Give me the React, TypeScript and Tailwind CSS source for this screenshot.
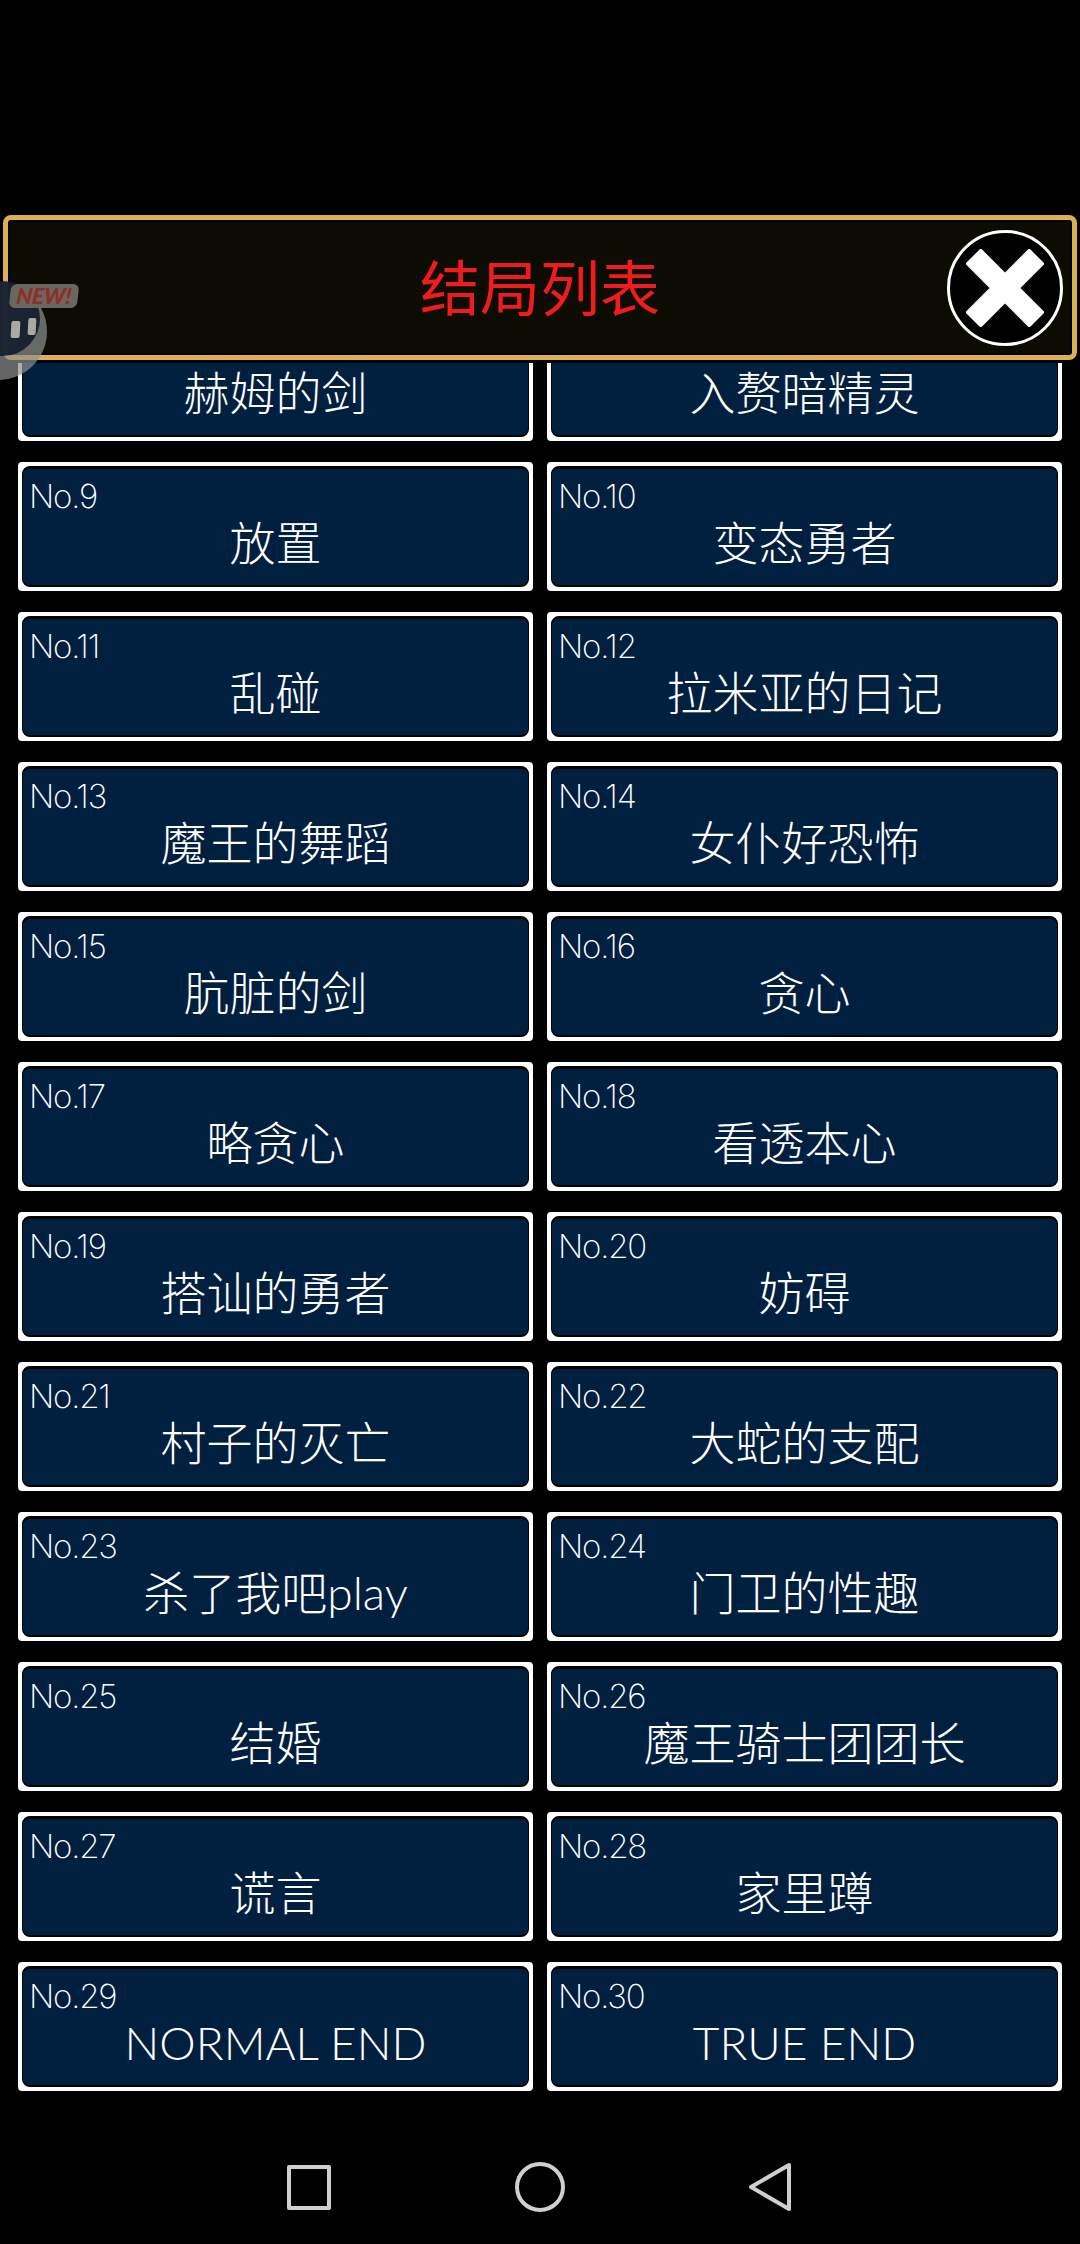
const endings: [number, string][] = [
  [7, "赫姆的剑"],
  [8, "入赘暗精灵"],
  [9, "放置"],
  [10, "变态勇者"],
  [11, "乱碰"],
  [12, "拉米亚的日记"],
  [13, "魔王的舞蹈"],
  [14, "女仆好恐怖"],
  [15, "肮脏的剑"],
  [16, "贪心"],
  [17, "略贪心"],
  [18, "看透本心"],
  [19, "搭讪的勇者"],
  [20, "妨碍"],
  [21, "村子的灭亡"],
  [22, "大蛇的支配"],
  [23, "杀了我吧play"],
  [24, "门卫的性趣"],
  [25, "结婚"],
  [26, "魔王骑士团团长"],
  [27, "谎言"],
  [28, "家里蹲"],
  [29, "NORMAL END"],
  [30, "TRUE END"],
];

const font = "font-['Lato','Noto_Sans_CJK_SC',sans-serif]";

function EndingCard({ no, title }: { no: number; title: string }) {
  return (
    <div className="h-[129px] rounded-[4px] border-[4px] border-white bg-white">
      <div className="h-full rounded-[8px] border-x border-t-[3px] border-b-2 border-black bg-[#011f3f] pl-[6px] pt-[7px] text-white">
        <div className="h-[40px] font-['Inter',sans-serif] text-[33px] leading-[40px] font-extralight tracking-[-1.2px]">No.{no}</div>
        <div className="-ml-[6px] text-center text-[46px] leading-[54px] font-light">{title}</div>
      </div>
    </div>
  );
}

export default function App() {
  return (
    <div className={`relative h-[2244px] overflow-hidden bg-black ${font}`}>
      <div className="pt-[215px]">
        <header className="relative mx-[3px] flex h-[145px] items-center justify-center rounded-[8px] border-[5px] border-[#dcae55] bg-[#0d0c02] shadow-[inset_0_0_0_2px_#000]">
          <h1 className="text-[60px] leading-none text-[#f01c1c]">结局列表</h1>
          <button className="absolute right-[9px] top-[10px] flex h-[116px] w-[116px] items-center justify-center rounded-full border-[3px] border-white bg-black">
            <svg width="78" height="78" viewBox="0 0 78 78">
              <path d="M7 7 L71 71 M71 7 L7 71" stroke="#fff" strokeWidth="22" />
            </svg>
          </button>
        </header>
      </div>

      <div className="mt-[3px] h-[1780px] overflow-hidden">
        <div className="-mt-[51px] grid grid-cols-[515px_515px] gap-x-[14px] gap-y-[21px] pl-[18px]">
          {endings.map(([no, title]) => (
            <EndingCard key={no} no={no} title={title} />
          ))}
        </div>
      </div>

      <nav className="mt-[19px] flex items-center justify-center gap-[184px] pr-[3px]">
        <div className="h-[45px] w-[44px] rounded-[2px] border-[4px] border-[#cfcfcf]" />
        <div className="h-[50px] w-[50px] rounded-full border-[4px] border-[#cfcfcf]" />
        <svg width="42" height="50" viewBox="0 0 42 50" fill="none">
          <path d="M40 3 L2 25 L40 47 Z" stroke="#cfcfcf" strokeWidth="4" strokeLinejoin="round" />
        </svg>
      </nav>

      {/* floating assistant bubble over the page */}
      <div className="absolute left-[-50px] top-[283px] h-[97px] w-[97px] rounded-full bg-[#8f9191]/70" />
      <div className="absolute left-[-47px] top-[281px] h-[75px] w-[87px] rounded-full bg-[#16202e]/95" />
      <div className="absolute left-[11px] top-[321px] h-[17px] w-[9px] -skew-x-3 rounded-[2px] bg-[#a9a9a0]" />
      <div className="absolute left-[28px] top-[318px] h-[17px] w-[8px] -skew-x-3 rounded-[2px] bg-[#a9a9a0]" />
      <div className="absolute left-[10px] top-[284px] flex h-[24px] w-[68px] -skew-x-6 items-center justify-center rounded-[6px] bg-[#6b6660]">
        <span className="text-[22px] leading-none font-black italic text-[#8e2f28]">NEW!</span>
      </div>
    </div>
  );
}
